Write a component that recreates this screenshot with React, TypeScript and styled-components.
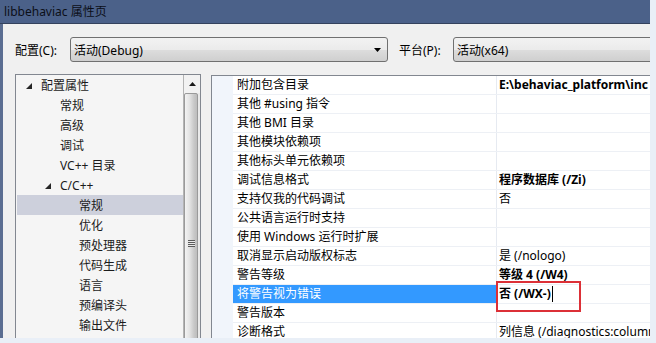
import React from "react";
import styled, { createGlobalStyle } from "styled-components";

const GlobalStyle = createGlobalStyle`
  html, body {
    margin: 0;
    padding: 0;
    background: #e9eff7;
  }
  body {
    font-family: "Noto Sans", "Noto Sans CJK SC", sans-serif;
    font-size: 12px;
    color: #000;
  }
`;

interface TreeItem {
  label: string;
  level: number;
  expanded?: boolean;
  selected?: boolean;
}

interface Property {
  name: string;
  value?: string;
  bold?: boolean;
  selected?: boolean;
}

const TREE: TreeItem[] = [
  { label: "配置属性", level: 0, expanded: true },
  { label: "常规", level: 1 },
  { label: "高级", level: 1 },
  { label: "调试", level: 1 },
  { label: "VC++ 目录", level: 1 },
  { label: "C/C++", level: 1, expanded: true },
  { label: "常规", level: 2, selected: true },
  { label: "优化", level: 2 },
  { label: "预处理器", level: 2 },
  { label: "代码生成", level: 2 },
  { label: "语言", level: 2 },
  { label: "预编译头", level: 2 },
  { label: "输出文件", level: 2 },
];

const PROPERTIES: Property[] = [
  { name: "附加包含目录", value: "E:\\behaviac_platform\\inc", bold: true },
  { name: "其他 #using 指令" },
  { name: "其他 BMI 目录" },
  { name: "其他模块依赖项" },
  { name: "其他标头单元依赖项" },
  { name: "调试信息格式", value: "程序数据库 (/Zi)", bold: true },
  { name: "支持仅我的代码调试", value: "否" },
  { name: "公共语言运行时支持" },
  { name: "使用 Windows 运行时扩展" },
  { name: "取消显示启动版权标志", value: "是 (/nologo)" },
  { name: "警告等级", value: "等级 4 (/W4)", bold: true },
  { name: "将警告视为错误", value: "否 (/WX-)", bold: true, selected: true },
  { name: "警告版本" },
  { name: "诊断格式", value: "列信息 (/diagnostics:column)" },
];

const Window = styled.div`
  width: 650px;
  height: 338px;
  display: flex;
  flex-direction: column;
  overflow: hidden;
`;

const TitleBar = styled.div`
  flex: none;
  height: 23px;
  line-height: 23px;
  padding-left: 4px;
  background: #4b6189;
  border-bottom: 1px solid #34425d;
  color: #0b0f18;
  white-space: nowrap;
`;

const Client = styled.div`
  flex: 1;
  min-height: 0;
  display: flex;
  flex-direction: column;
  gap: 12px;
  padding: 13px 0 0 12px;
  background: #f0f0f0;
  border-left: 3px solid #5a6d91;
`;

const ConfigRow = styled.div`
  flex: none;
  display: flex;
  align-items: center;
  height: 25px;
`;

const FieldLabel = styled.span<{ $width: number; $offset?: number }>`
  flex: none;
  width: ${(p) => p.$width}px;
  margin-left: ${(p) => p.$offset ?? 0}px;
  white-space: nowrap;
`;

const Combo = styled.div<{ $width: number }>`
  flex: none;
  box-sizing: border-box;
  width: ${(p) => p.$width}px;
  height: 25px;
  display: flex;
  align-items: center;
  justify-content: space-between;
  padding: 0 6px 0 3px;
  border: 1px solid #707070;
  border-radius: 3px;
  background: linear-gradient(#f2f2f2, #ebebeb 50%, #dddddd 51%, #cfcfcf);
  white-space: nowrap;
`;

const Panels = styled.div`
  flex: none;
  display: flex;
  gap: 10px;
  height: 300px;
`;

const TreeBox = styled.div`
  flex: none;
  box-sizing: border-box;
  width: 186px;
  display: flex;
  border: 1px solid #828790;
  background: #f5f5f5;
`;

const TreeList = styled.div`
  flex: 1;
  padding: 0 0 0 1px;
`;

const TreeRow = styled.div<{ $level: number; $selected?: boolean }>`
  height: 20px;
  display: flex;
  align-items: center;
  padding-left: ${(p) => 9 + p.$level * 19}px;
  background: ${(p) => (p.$selected ? "#cdd0dc" : "transparent")};
  color: #1b1b1b;
  white-space: nowrap;
`;

const Toggle = styled.span`
  flex: none;
  width: 15px;
  height: 20px;
  display: flex;
  align-items: center;
  padding-top: 1px;
  box-sizing: border-box;
`;

const ScrollBar = styled.div`
  flex: none;
  width: 17px;
  display: flex;
  flex-direction: column;
  border-left: 1px solid #b4b4b4;
  box-sizing: border-box;
  background: #eaeaea;
`;

const ScrollButton = styled.div`
  flex: none;
  height: 18px;
  display: flex;
  align-items: center;
  justify-content: center;
  background: #f2f2f2;
`;

const Thumb = styled.div`
  flex: 1;
  width: 14px;
  box-sizing: border-box;
  border: 1px solid #9a9a9a;
  border-radius: 2px;
  background: linear-gradient(to right, #f3f3f3, #e2e2e2 40%, #c8c8c8 75%, #bdbdbd);
  display: flex;
  flex-direction: column;
  align-items: center;
  padding-top: 146px;
`;

const Grip = styled.div`
  width: 7px;
  height: 7px;
  background: repeating-linear-gradient(#5a5a5a 0 1px, #e8e8e8 1px 2px);
`;

const GridBox = styled.div`
  flex: none;
  box-sizing: border-box;
  width: 460px;
  margin-top: 1px;
  display: flex;
  border: 1px solid #828790;
  background: #fff;
`;

const Gutter = styled.div`
  flex: none;
  width: 21px;
  background: #f1f5fb;
`;

const GridRows = styled.div`
  flex: 1;
  display: flex;
  flex-direction: column;
`;

const PropRow = styled.div`
  flex: none;
  height: 19px;
  display: flex;
  box-sizing: border-box;
  border-bottom: 1px solid #edf0f5;
`;

const NameCell = styled.div<{ $selected?: boolean }>`
  flex: none;
  width: 264px;
  box-sizing: border-box;
  padding-left: 4px;
  line-height: 18px;
  border-right: 1px solid #e6eaf1;
  background: ${(p) => (p.$selected ? "#3399ff" : "#fff")};
  color: ${(p) => (p.$selected ? "#fff" : "#000")};
  white-space: nowrap;
`;

const ValueCell = styled.div<{ $bold?: boolean }>`
  position: relative;
  flex: 1;
  padding-left: 2px;
  line-height: 18px;
  font-weight: ${(p) => (p.$bold ? 700 : 400)};
  white-space: nowrap;
`;

const Caret = styled.span`
  display: inline-block;
  width: 0;
  height: 16px;
  margin-left: 1px;
  border-left: 1px solid #000;
  vertical-align: -4px;
`;

const Highlight = styled.div`
  position: absolute;
  left: -1px;
  top: -4px;
  width: 85px;
  height: 31px;
  box-sizing: border-box;
  border: 2px solid #dc3037;
  pointer-events: none;
`;

const ExpandArrow = () => (
  <svg width="6" height="6" viewBox="0 0 6 6">
    <polygon points="6,0 6,6 0,6" fill="#262626" />
  </svg>
);

const DropArrow = () => (
  <svg width="7" height="4" viewBox="0 0 7 4">
    <polygon points="0,0 7,0 3.5,4" fill="#000" />
  </svg>
);

const UpArrow = () => (
  <svg width="7" height="4" viewBox="0 0 7 4">
    <polygon points="0,4 7,4 3.5,0" fill="#1a1a1a" />
  </svg>
);

const App = () => (
  <>
    <GlobalStyle />
    <Window>
      <TitleBar>libbehaviac 属性页</TitleBar>
      <Client>
        <ConfigRow>
          <FieldLabel $width={55}>配置(C):</FieldLabel>
          <Combo $width={318}>
            <span>活动(Debug)</span>
            <DropArrow />
          </Combo>
          <FieldLabel $width={54} $offset={11}>
            平台(P):
          </FieldLabel>
          <Combo $width={230}>
            <span>活动(x64)</span>
          </Combo>
        </ConfigRow>
        <Panels>
          <TreeBox>
            <TreeList>
              {TREE.map((item, i) => (
                <TreeRow key={i} $level={item.level} $selected={item.selected}>
                  <Toggle>{item.expanded && <ExpandArrow />}</Toggle>
                  {item.label}
                </TreeRow>
              ))}
            </TreeList>
            <ScrollBar>
              <ScrollButton>
                <UpArrow />
              </ScrollButton>
              <Thumb>
                <Grip />
              </Thumb>
            </ScrollBar>
          </TreeBox>
          <GridBox>
            <Gutter />
            <GridRows>
              {PROPERTIES.map((prop, i) => (
                <PropRow key={i}>
                  <NameCell $selected={prop.selected}>{prop.name}</NameCell>
                  <ValueCell $bold={prop.bold}>
                    {prop.value}
                    {prop.selected && (
                      <>
                        <Caret />
                        <Highlight />
                      </>
                    )}
                  </ValueCell>
                </PropRow>
              ))}
            </GridRows>
          </GridBox>
        </Panels>
      </Client>
    </Window>
  </>
);

export default App;
